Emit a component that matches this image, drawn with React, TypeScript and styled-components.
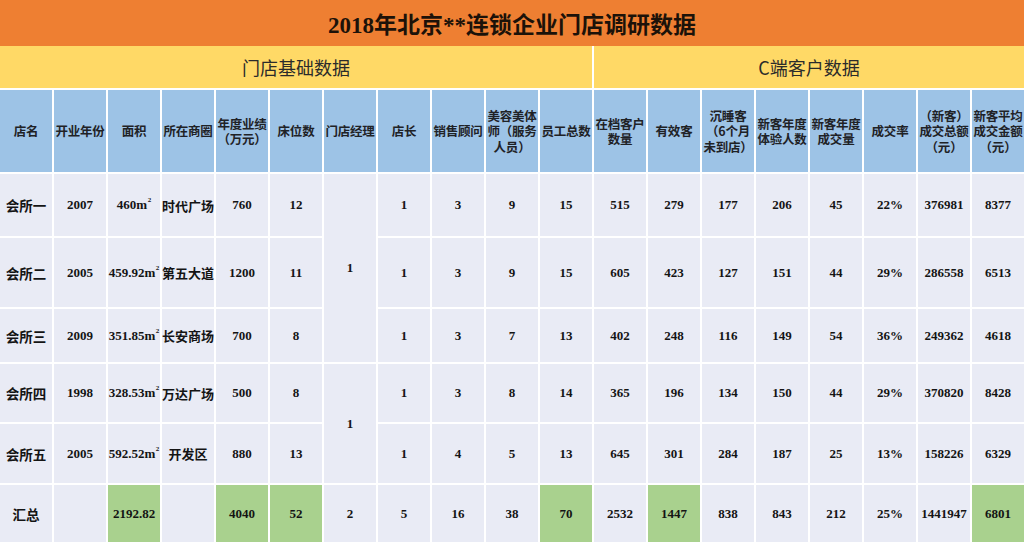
import React from "react";
import styled, { createGlobalStyle } from "styled-components";

const GlobalStyle = createGlobalStyle`
  html, body { margin: 0; padding: 0; background: #ffffff; }
  * { box-sizing: border-box; }
`;

const Page = styled.div`
  width: 1024px;
  height: 542px;
  overflow: hidden;
  background: #ffffff;
  display: flex;
  flex-direction: column;
`;

const TitleBar = styled.div`
  height: 46px;
  flex: none;
  background: #ee7f32;
  display: flex;
  align-items: center;
  justify-content: center;
  font-family: "Liberation Serif", "Noto Sans CJK SC", serif;
  font-weight: 700;
  font-size: 23px;
  color: #1c1209;
`;

const Sheet = styled.div`
  display: grid;
  grid-template-columns: repeat(19, 52px);
  grid-template-rows: 42px 82px 62px 69px 53px 58px 59px 57px;
  gap: 2px;
  background: #ffffff;
`;

const GroupCell = styled.div<{ $span: number }>`
  grid-column: span ${(p) => p.$span};
  background: #ffd966;
  display: flex;
  align-items: center;
  justify-content: center;
  font-family: "Noto Sans CJK SC", sans-serif;
  font-size: 18px;
  font-weight: 400;
  color: #2b2b2b;
`;

const HeadCell = styled.div`
  background: #9dc3e6;
  display: flex;
  flex-direction: column;
  align-items: center;
  justify-content: center;
  text-align: center;
  font-family: "Noto Sans CJK SC", sans-serif;
  font-size: 12.5px;
  font-weight: 700;
  color: #1f2226;
  white-space: nowrap;
  letter-spacing: -0.2px;
`;

const HeadLine = styled.span`
  display: block;
  line-height: 15.5px;
  height: 15.5px;
`;

const Cell = styled.div<{ $green?: boolean; $rows?: number; $name?: boolean }>`
  grid-row: span ${(p) => p.$rows ?? 1};
  background: ${(p) => (p.$green ? "#a9d18e" : "#e9ebf5")};
  display: flex;
  align-items: center;
  justify-content: center;
  font-family: "Liberation Serif", "Noto Sans CJK SC", serif;
  font-size: ${(p) => (p.$name ? "13.5px" : "13px")};
  font-weight: 700;
  color: #141414;
  white-space: nowrap;
`;

const Sup = styled.span`
  font-size: 7px;
  position: relative;
  top: -5px;
  margin-left: 0.5px;
`;

const headers: string[][] = [
  ["店名"],
  ["开业年份"],
  ["面积"],
  ["所在商圈"],
  ["年度业绩", "（万元）"],
  ["床位数"],
  ["门店经理"],
  ["店长"],
  ["销售顾问"],
  ["美容美体", "师（服务", "人员）"],
  ["员工总数"],
  ["在档客户", "数量"],
  ["有效客"],
  ["沉睡客", "（6个月", "未到店）"],
  ["新客年度", "体验人数"],
  ["新客年度", "成交量"],
  ["成交率"],
  ["（新客）", "成交总额", "（元）"],
  ["新客平均", "成交金额", "（元）"],
];

type Row = {
  name: string;
  year: string;
  area: string;
  district: string;
  rest1: string[];
  manager?: { value: string; rows: number };
  rest2: string[];
};

const rows: Row[] = [
  {
    name: "会所一",
    year: "2007",
    area: "460",
    district: "时代广场",
    rest1: ["760", "12"],
    manager: { value: "1", rows: 3 },
    rest2: ["1", "3", "9", "15", "515", "279", "177", "206", "45", "22%", "376981", "8377"],
  },
  {
    name: "会所二",
    year: "2005",
    area: "459.92",
    district: "第五大道",
    rest1: ["1200", "11"],
    rest2: ["1", "3", "9", "15", "605", "423", "127", "151", "44", "29%", "286558", "6513"],
  },
  {
    name: "会所三",
    year: "2009",
    area: "351.85",
    district: "长安商场",
    rest1: ["700", "8"],
    rest2: ["1", "3", "7", "13", "402", "248", "116", "149", "54", "36%", "249362", "4618"],
  },
  {
    name: "会所四",
    year: "1998",
    area: "328.53",
    district: "万达广场",
    rest1: ["500", "8"],
    manager: { value: "1", rows: 2 },
    rest2: ["1", "3", "8", "14", "365", "196", "134", "150", "44", "29%", "370820", "8428"],
  },
  {
    name: "会所五",
    year: "2005",
    area: "592.52",
    district: "开发区",
    rest1: ["880", "13"],
    rest2: ["1", "4", "5", "13", "645", "301", "284", "187", "25", "13%", "158226", "6329"],
  },
];

const totals: { v: string; g?: boolean }[] = [
  { v: "汇总" },
  { v: "" },
  { v: "2192.82", g: true },
  { v: "" },
  { v: "4040", g: true },
  { v: "52", g: true },
  { v: "2" },
  { v: "5" },
  { v: "16" },
  { v: "38" },
  { v: "70", g: true },
  { v: "2532" },
  { v: "1447", g: true },
  { v: "838" },
  { v: "843" },
  { v: "212" },
  { v: "25%" },
  { v: "1441947" },
  { v: "6801", g: true },
];

export default function App() {
  return (
    <>
      <GlobalStyle />
      <Page>
        <TitleBar>2018年北京**连锁企业门店调研数据</TitleBar>
        <Sheet>
          <GroupCell $span={11}>门店基础数据</GroupCell>
          <GroupCell $span={8}>C端客户数据</GroupCell>
          {headers.map((lines, i) => (
            <HeadCell key={`h${i}`}>
              {lines.map((l, j) => (
                <HeadLine key={j}>{l}</HeadLine>
              ))}
            </HeadCell>
          ))}
          {rows.map((r, ri) => (
            <React.Fragment key={`r${ri}`}>
              <Cell $name>{r.name}</Cell>
              <Cell>{r.year}</Cell>
              <Cell>
                {r.area}m<Sup>2</Sup>
              </Cell>
              <Cell>{r.district}</Cell>
              {r.rest1.map((v, i) => (
                <Cell key={`a${i}`}>{v}</Cell>
              ))}
              {r.manager && <Cell $rows={r.manager.rows}>{r.manager.value}</Cell>}
              {r.rest2.map((v, i) => (
                <Cell key={`b${i}`}>{v}</Cell>
              ))}
            </React.Fragment>
          ))}
          {totals.map((t, i) => (
            <Cell key={`t${i}`} $green={t.g} $name={i === 0}>
              {t.v}
            </Cell>
          ))}
        </Sheet>
      </Page>
    </>
  );
}
